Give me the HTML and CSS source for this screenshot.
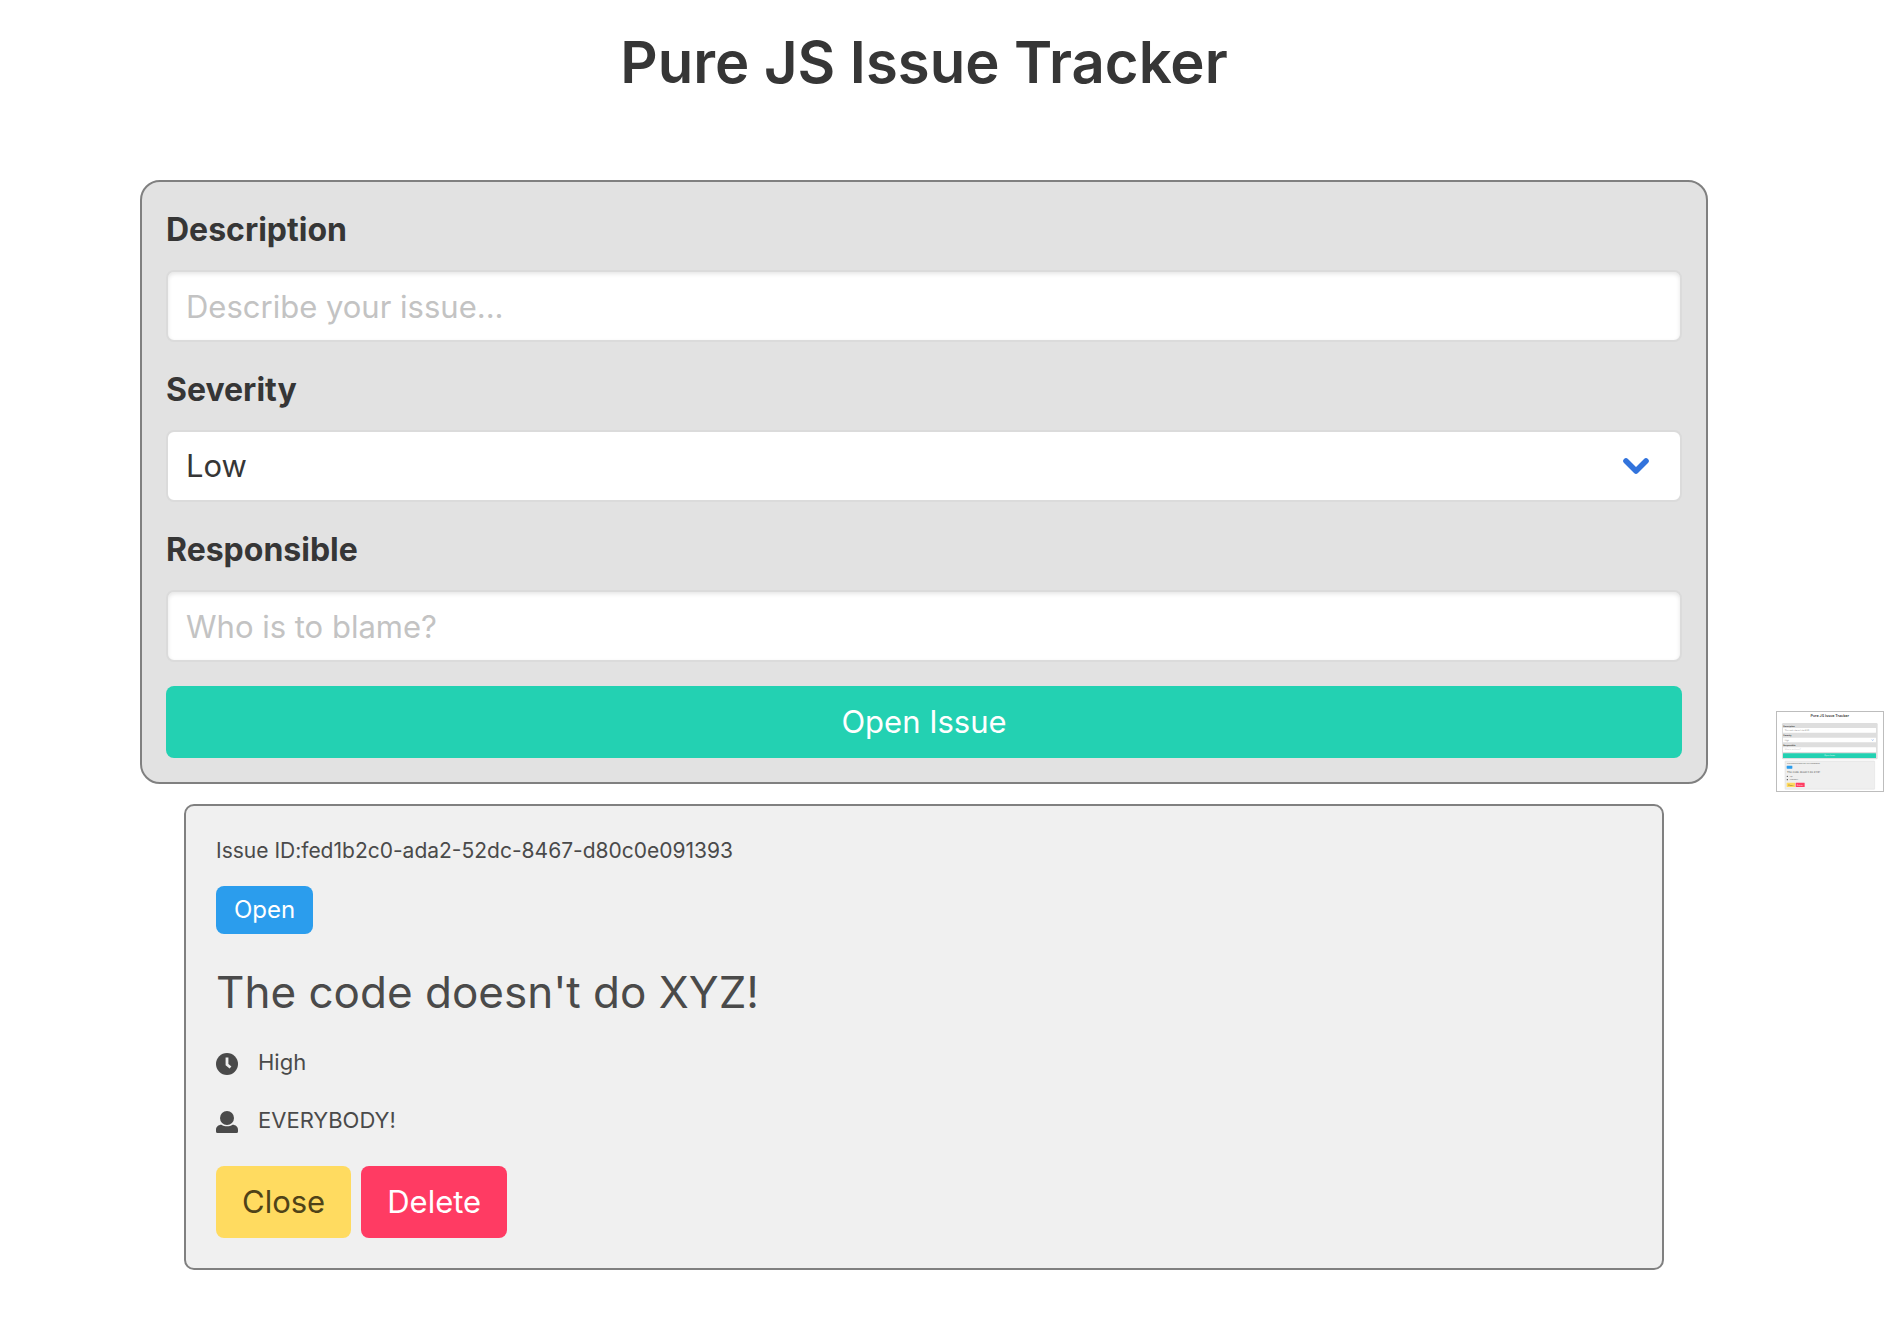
FILE: index.html
```html
<!DOCTYPE html>
<html lang="en">
<head>
<meta charset="utf-8">
<meta name="viewport" content="width=device-width, initial-scale=1">
<title>Pure JS Issue Tracker</title>
<link rel="stylesheet" href="styles.css">
</head>
<body>
<main class="page">
  <h1 class="page-title">Pure JS Issue Tracker</h1>

  <form class="issue-form">
    <div class="field">
      <label class="label" for="description">Description</label>
      <input class="control text-input" id="description" type="text" placeholder="Describe your issue...">
    </div>
    <div class="field">
      <label class="label" for="severity">Severity</label>
      <div class="select-wrap">
        <select class="control" id="severity">
          <option>Low</option>
          <option>Medium</option>
          <option>High</option>
        </select>
        <svg class="chevron" viewBox="0 0 26 18" aria-hidden="true"><path d="M3 4L13 14L23 4" fill="none" stroke="#3273dc" stroke-width="5.600" stroke-linecap="round" stroke-linejoin="round"/></svg>
      </div>
    </div>
    <div class="field">
      <label class="label" for="responsible">Responsible</label>
      <input class="control text-input" id="responsible" type="text" placeholder="Who is to blame?">
    </div>
    <button class="button button-primary" type="button">Open Issue</button>
  </form>

  <article class="issue">
    <p class="issue-id">Issue ID:fed1b2c0-ada2-52dc-8467-d80c0e091393</p>
    <span class="tag">Open</span>
    <h2 class="issue-title">The code doesn't do XYZ!</h2>
    <p class="meta">
      <svg class="meta-icon" viewBox="0 0 22 22" aria-hidden="true"><circle cx="11" cy="11" r="11" fill="#4a4a4a"/><path d="M11 4.500V11.500L14.500 14.500" fill="none" stroke="#efefef" stroke-width="2.800"/></svg>
      <span>High</span>
    </p>
    <p class="meta">
      <svg class="meta-icon" viewBox="0 0 22 22" aria-hidden="true"><circle cx="11" cy="7" r="7" fill="#4a4a4a"/><path d="M5.500 13.800C7 14.800 9 15.300 11 15.300S15 14.800 16.500 13.800C19.800 13.800 22 16 22 19V20.500Q22 22 20.500 22H1.500Q0 22 0 20.500V19C0 16 2.200 13.800 5.500 13.800Z" fill="#4a4a4a"/></svg>
      <span>EVERYBODY!</span>
    </p>
    <div class="actions">
      <button class="button button-warning" type="button">Close</button>
      <button class="button button-danger" type="button">Delete</button>
    </div>
  </article>
</main>

<svg class="preview" viewBox="0 0 324 243" role="img" aria-label="Preview of the issue tracker">
  <rect x="1.500" y="1.500" width="321" height="240" fill="#fff" stroke="#bdbdbd" stroke-width="3"/>
  <text x="161" y="17" font-size="11" font-weight="600" text-anchor="middle" fill="#363636">Pure JS Issue Tracker</text>
  <rect x="18" y="36" width="287" height="109" rx="4" fill="#dedede"/>
  <rect x="21" y="51" width="279" height="14" rx="1" fill="#fff"/>
  <rect x="21" y="80" width="279" height="14" rx="1" fill="#fff"/>
  <rect x="21" y="109" width="279" height="14" rx="1" fill="#fff"/>
  <rect x="21" y="127" width="279" height="14" rx="1" fill="#23d1b2"/>
  <g font-size="6" font-weight="700" fill="#363636">
    <text x="22" y="47">Description</text><text x="22" y="76">Severity</text><text x="22" y="105">Responsible</text>
  </g>
  <g font-size="6" fill="#777">
    <text x="26" y="60">The code doesn't do XYZ!</text><text x="26" y="89">High</text><text x="26" y="118" fill="#bbb">Who is to blame?</text>
    <text x="161" y="136" text-anchor="middle" fill="#fff">Open Issue</text>
  </g>
  <path d="M288 86l2 2 2-2" fill="none" stroke="#3273dc" stroke-width="2"/>
  <rect x="27" y="150" width="269" height="85" rx="2" fill="#efefef" stroke="#d2d2d2"/>
  <text x="33" y="160" font-size="4" fill="#4a4a4a">Issue ID:fed1b2c0-ada2-52dc-8467-d80c0e091393</text>
  <rect x="32" y="164" width="17" height="9" rx="1" fill="#2b9ded"/>
  <text x="33" y="186" font-size="8" fill="#4a4a4a">The code doesn't do XYZ!</text>
  <circle cx="34" cy="196" r="2" fill="#4a4a4a"/><circle cx="34" cy="206" r="2" fill="#4a4a4a"/>
  <text x="41" y="198" font-size="4" fill="#4a4a4a">High</text><text x="41" y="208" font-size="4" fill="#4a4a4a">EVERYBODY!</text>
  <rect x="32" y="215" width="25" height="13" rx="1" fill="#ffdb60"/><rect x="59" y="215" width="27" height="13" rx="1" fill="#ff3b63"/>
  <text x="44" y="224" font-size="6" text-anchor="middle" fill="#4f4318">Close</text><text x="72" y="224" font-size="6" text-anchor="middle" fill="#fff">Delete</text>
</svg>
</body>
</html>
```
FILE: styles.css
```css
* { box-sizing: border-box; }

body {
  margin: 0;
  background: #fff;
  color: #4a4a4a;
  font-family: Inter, "Liberation Sans", sans-serif;
  font-size: 31px;
  line-height: 48px;
}

h1, h2, p { margin: 0; }

.page { padding: 26px 176px 48px 140px; }

.page-title {
  margin-bottom: 82px;
  color: #363636;
  font-size: 58px;
  font-weight: 600;
  line-height: 72px;
  text-align: center;
}

.issue-form {
  padding: 24px;
  border: 2px solid #808080;
  border-radius: 20px;
  background: #e2e2e2;
}

.field { margin-bottom: 24px; }

.label {
  display: block;
  margin-bottom: 16px;
  color: #363636;
  font-size: 32px;
  font-weight: 700;
}

.control {
  display: block;
  width: 100%;
  height: 72px;
  padding: 0 18px;
  border: 2px solid #dbdbdb;
  border-radius: 8px;
  background: #fff;
  color: #363636;
  font: inherit;
  appearance: none;
}

.text-input { box-shadow: inset 0 2px 4px rgba(10, 10, 10, 0.1); }
.text-input::placeholder { color: #c3c3c3; opacity: 1; }

.select-wrap {
  display: grid;
  align-items: center;
}
.select-wrap > * { grid-area: 1 / 1; }

.chevron {
  justify-self: end;
  width: 26px;
  height: 18px;
  margin-right: 33px;
  pointer-events: none;
}

.button {
  height: 72px;
  padding: 0 26px;
  border: 0;
  border-radius: 8px;
  font: inherit;
}
.button-primary { display: block; width: 100%; background: #23d1b2; color: #fff; }
.button-warning { background: #ffdb60; color: #4f4318; }
.button-danger { background: #ff3b63; color: #fff; }

.issue {
  margin: 20px 44px 0;
  padding: 30px;
  border: 2px solid #808080;
  border-radius: 10px;
  background: #f0f0f0;
}

.issue-id {
  margin-bottom: 20px;
  font-size: 21px;
  line-height: 30px;
}

.tag {
  display: block;
  width: fit-content;
  padding: 0 18px;
  border-radius: 8px;
  background: #2b9ded;
  color: #fff;
  font-size: 24px;
}

.issue-title {
  margin: 24px 0 18px;
  font-size: 44px;
  font-weight: 400;
  line-height: 68px;
}

.meta {
  display: flex;
  gap: 20px;
  align-items: center;
  margin-bottom: 22px;
  font-size: 22px;
  line-height: 36px;
}

.meta-icon { width: 22px; height: 22px; margin-top: 4px; }

.actions { display: flex; gap: 10px; padding-top: 6px; }

.preview {
  position: absolute;
  top: 711px;
  right: 0;
  width: 108px;
  height: 81px;
  text-rendering: geometricPrecision;
}
```
